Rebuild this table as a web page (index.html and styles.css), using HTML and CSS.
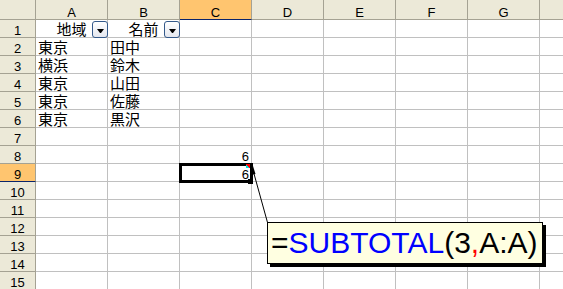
FILE: index.html
```html
<!DOCTYPE html>
<html lang="ja">
<head>
<meta charset="utf-8">
<title>SUBTOTAL</title>
<link rel="stylesheet" href="styles.css">
</head>
<body>
<div class="sheet">
  <div class="grid">
    <div class="corner"></div><div class="ch">A</div><div class="ch">B</div><div class="ch sel">C</div><div class="ch">D</div><div class="ch">E</div><div class="ch">F</div><div class="ch">G</div><div class="ch"></div>

    <div class="rh">1</div><div class="c jp hd">地域<span class="dd"></span></div><div class="c jp hd">名前<span class="dd"></span></div><div class="c"></div><div class="c"></div><div class="c"></div><div class="c"></div><div class="c"></div><div class="c"></div>

    <div class="rh">2</div><div class="c jp">東京</div><div class="c jp">田中</div><div class="c"></div><div class="c"></div><div class="c"></div><div class="c"></div><div class="c"></div><div class="c"></div>

    <div class="rh">3</div><div class="c jp">横浜</div><div class="c jp">鈴木</div><div class="c"></div><div class="c"></div><div class="c"></div><div class="c"></div><div class="c"></div><div class="c"></div>

    <div class="rh">4</div><div class="c jp">東京</div><div class="c jp">山田</div><div class="c"></div><div class="c"></div><div class="c"></div><div class="c"></div><div class="c"></div><div class="c"></div>

    <div class="rh">5</div><div class="c jp">東京</div><div class="c jp">佐藤</div><div class="c"></div><div class="c"></div><div class="c"></div><div class="c"></div><div class="c"></div><div class="c"></div>

    <div class="rh">6</div><div class="c jp">東京</div><div class="c jp">黒沢</div><div class="c"></div><div class="c"></div><div class="c"></div><div class="c"></div><div class="c"></div><div class="c"></div>

    <div class="rh">7</div><div class="c"></div><div class="c"></div><div class="c"></div><div class="c"></div><div class="c"></div><div class="c"></div><div class="c"></div><div class="c"></div>

    <div class="rh">8</div><div class="c"></div><div class="c"></div><div class="c num">6</div><div class="c"></div><div class="c"></div><div class="c"></div><div class="c"></div><div class="c"></div>

    <div class="rh sel">9</div><div class="c"></div><div class="c"></div><div class="c num cur">6</div><div class="c"></div><div class="c"></div><div class="c"></div><div class="c"></div><div class="c"></div>

    <div class="rh">10</div><div class="c"></div><div class="c"></div><div class="c"></div><div class="c"></div><div class="c"></div><div class="c"></div><div class="c"></div><div class="c"></div>

    <div class="rh">11</div><div class="c"></div><div class="c"></div><div class="c"></div><div class="c"></div><div class="c"></div><div class="c"></div><div class="c"></div><div class="c"></div>

    <div class="rh">12</div><div class="c"></div><div class="c"></div><div class="c"></div><div class="c"></div><div class="c"></div><div class="c"></div><div class="c"></div><div class="c"></div>

    <div class="rh">13</div><div class="c"></div><div class="c"></div><div class="c"></div><div class="c"></div><div class="c"></div><div class="c"></div><div class="c"></div><div class="c"></div>

    <div class="rh">14</div><div class="c"></div><div class="c"></div><div class="c"></div><div class="c"></div><div class="c"></div><div class="c"></div><div class="c"></div><div class="c"></div>

    <div class="rh">15</div><div class="c"></div><div class="c"></div><div class="c"></div><div class="c"></div><div class="c"></div><div class="c"></div><div class="c"></div><div class="c"></div>

    <div class="rh">16</div><div class="c"></div><div class="c"></div><div class="c"></div><div class="c"></div><div class="c"></div><div class="c"></div><div class="c"></div><div class="c"></div>
  </div>

  <svg class="arrow" width="563" height="289" viewBox="0 0 563 289">
    <line x1="253.5" y1="172" x2="267.5" y2="222.5" stroke="#000" stroke-width="1"/>
    <polygon points="253,166 250.5,175 255.5,174" fill="#000"/>
  </svg>

  <div class="tip">=<span class="fn">SUBTOTAL</span>(3<span class="comma">,</span>A:A)</div>
</div>
</body>
</html>
```

FILE: styles.css
```css
html, body {
  margin: 0;
  padding: 0;
  background: #fff;
}

body {
  width: 563px;
  height: 289px;
  overflow: hidden;
}

.sheet {
  position: relative;
  width: 563px;
  height: 289px;
  overflow: hidden;
}

.grid {
  display: grid;
  grid-template-columns: 36px repeat(8, 72px);
  grid-template-rows: 20px;
  grid-auto-rows: 18px;
  font-family: "Liberation Sans", Arial, sans-serif;
  font-size: 13px;
  color: #000;
}

.grid > div {
  box-sizing: border-box;
  display: flex;
  align-items: flex-end;
  line-height: 11px;
  white-space: nowrap;
}

.corner,
.ch,
.rh {
  background: #ECE9D8;
  border-right: 1px solid #A5A293;
  border-bottom: 1px solid #A5A293;
  justify-content: center;
  padding-bottom: 1px;
}

.ch.sel,
.rh.sel {
  background: #FFC56F;
  border-bottom-color: #0A246A;
}

.c {
  border-right: 1px solid #C0C0C0;
  border-bottom: 1px solid #C0C0C0;
  padding-left: 2px;
}

.grid > .jp {
  font-family: "Noto Sans CJK JP", "Noto Sans CJK SC", sans-serif;
  font-size: 15px;
  line-height: 17px;
}

.hd {
  position: relative;
  justify-content: center;
  padding-left: 0;
}

.dd {
  position: absolute;
  right: -1px;
  top: 1px;
  width: 16px;
  height: 17px;
  box-sizing: border-box;
  border: 1px solid #34598A;
  border-radius: 3px;
  background: linear-gradient(#FFFFFF, #E4E7EF);
  display: flex;
  align-items: center;
  justify-content: center;
}

.dd::after {
  content: "";
  width: 1px;
  height: 0;
  border-top: 4px solid #000;
  border-left: 3px solid transparent;
  border-right: 3px solid transparent;
  margin-top: 2px;
  margin-left: 1px;
}

.num {
  justify-content: flex-end;
  padding-right: 2px;
  padding-bottom: 1px;
}

.cur {
  position: relative;
  z-index: 1;
  outline: 3px solid #000;
  outline-offset: -2px;
}

.cur::before {
  content: "";
  position: absolute;
  right: 1px;
  top: 0;
  width: 4px;
  height: 4px;
  background: linear-gradient(45deg, #00E0E0 50%, #FF0000 50%);
}

.cur::after {
  content: "";
  position: absolute;
  right: -2px;
  bottom: -3px;
  width: 5px;
  height: 5px;
  background: #000;
}

.arrow {
  position: absolute;
  left: 0;
  top: 0;
  z-index: 2;
  pointer-events: none;
}

.tip {
  position: absolute;
  left: 267px;
  top: 222px;
  width: 276px;
  height: 42px;
  box-sizing: border-box;
  border: 1px solid #000;
  background: #FFFFE1;
  box-shadow: 3px 3px 0 #000;
  padding-left: 3px;
  font-family: "Liberation Sans", Arial, sans-serif;
  font-size: 30px;
  line-height: 40px;
  white-space: nowrap;
  color: #000;
  z-index: 3;
}

.fn {
  color: #0000FF;
}

.comma {
  color: #FF0000;
}
```
